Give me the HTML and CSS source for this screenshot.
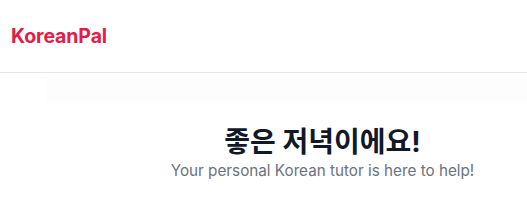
FILE: index.html
```html
<!DOCTYPE html>
<html lang="ko">
<head>
    <meta charset="UTF-8">
    <meta name="viewport" content="width=device-width, initial-scale=1.0">
    <title>KoreanPal</title>
    <link rel="stylesheet" href="styles.css">
</head>
<body>
    <header class="topbar">
        <div class="logo">KoreanPal</div>
    </header>
    <main class="main">
        <div class="fade-strip"></div>
        <section class="greeting">
            <h1>좋은 저녁이에요!</h1>
            <p>Your personal Korean tutor is here to help!</p>
        </section>
    </main>
</body>
</html>
```
FILE: styles.css
```css
body {
    margin: 0;
    font-family: Inter, "Noto Sans CJK KR", sans-serif;
    background: #ffffff;
    height: 100vh;
    overflow: hidden;
}

.topbar {
    height: 72px;
    display: flex;
    align-items: center;
    padding: 0 11px;
    border-bottom: 1px solid #e5e7eb;
}

.logo {
    color: #e11d48;
    font-size: 19.5px;
    font-weight: 700;
    letter-spacing: -0.1px;
}

.main {
    padding-left: 46px;
}

.fade-strip {
    margin-top: 6px;
    height: 24px;
    background: #fdfdfd;
}

.greeting {
    padding-left: 72px;
    text-align: center;
}

.greeting h1 {
    margin: 21px 0 0;
    font-size: 28px;
    font-weight: 700;
    color: #111827;
    line-height: 36px;
}

.greeting p {
    margin: 0;
    font-size: 15.25px;
    color: #6b7280;
    line-height: 22px;
}
```
